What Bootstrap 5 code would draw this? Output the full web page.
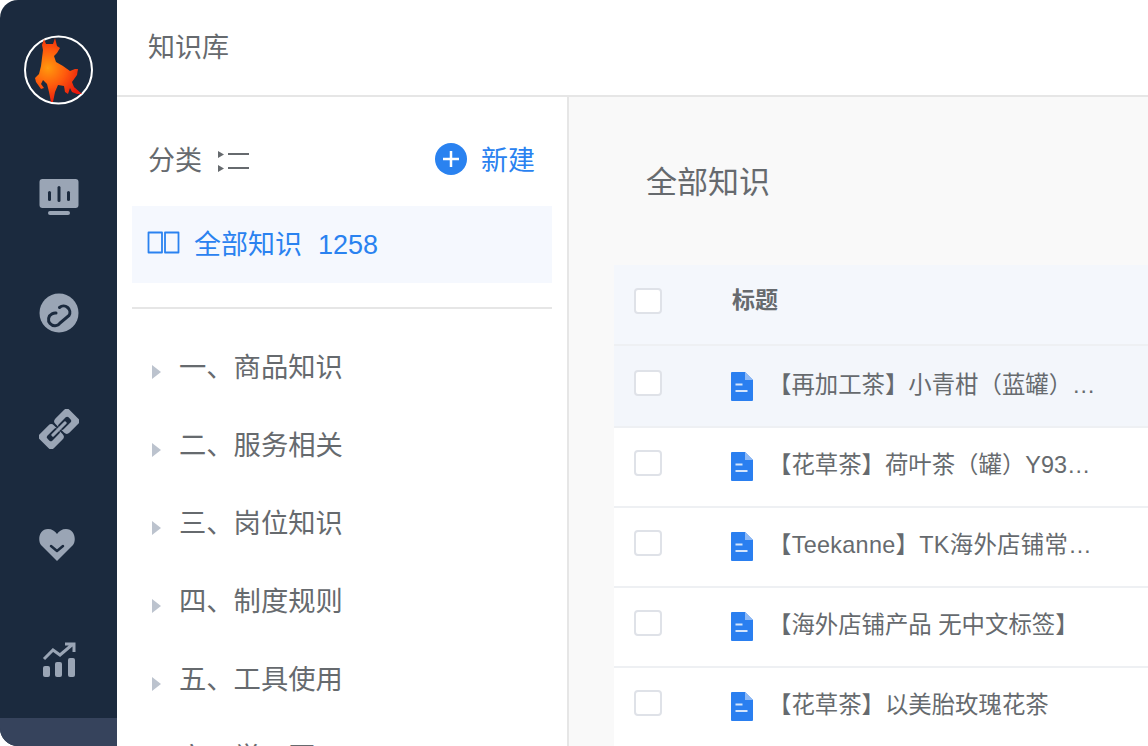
<!DOCTYPE html>
<html lang="zh">
<head>
<meta charset="utf-8">
<title>知识库</title>
<link rel="stylesheet" href="https://cdn.jsdelivr.net/npm/bootstrap@5.3.0/dist/css/bootstrap.min.css">
<style>
html,body{height:746px;overflow:hidden;background:#fff}
body{font-family:"Liberation Sans","Noto Sans CJK SC",sans-serif;color:#666a6e}
.shell{height:746px;width:1148px}
.rail{width:117px;flex:none;background:#1b2a3e;border-radius:18px 0 0 18px;overflow:hidden}
.rail-logo{height:140px;padding-top:35px;flex:none}
.rail-item{height:115.500px;flex:none}
.rail-stack{flex:1 1 auto}
.rail-foot{height:28px;background:#36435c;flex:none}
.topbar{height:97px;flex:none;border-bottom:2px solid #e6e6e6;padding-left:31px;padding-top:2px;font-size:27px;line-height:1;color:#666a6e}
.work{min-height:0}
.tree{width:452px;flex:none;border-right:2px solid #e6e6e6;padding:0 15px}
.tree-head{height:109px;padding:20px 17px 0 16px;font-size:27px}
.list-ico{margin-left:14px}
.new-btn{color:#2a82f0;gap:14px}
.new-ico{margin-bottom:5px;margin-left:-1px}
.all-row{height:77px;background:#f5f8fe;color:#2a82f0;font-size:27px;padding:2px 0 0 15px;gap:14px}
.book-ico{margin-bottom:6px}
.all-num{margin-left:16px}
.rule{height:2px;background:#e6e6e6;margin:24px 0 18px}
.tree-row{height:78px;font-size:27.300px;color:#666a6e;padding:4px 0 0 20px;gap:18px;white-space:nowrap}
.tree-arrow{width:0;height:0;border-left:9px solid #bcc3ce;border-top:7.500px solid transparent;border-bottom:7.500px solid transparent;margin-top:8px;flex:none}
.main-area{background:#f9f9f9;min-width:0;padding:0 0 0 45px;overflow:hidden}
.main-title{height:168px;font-size:31px;color:#666a6e;padding:3px 0 0 32px;line-height:1}
.sheet{background:#fff}
.sheet-row{height:80px;border-bottom:2px solid #eef0f3;padding:0 0 8px 20px;font-size:23.400px;color:#666a6e;white-space:nowrap}
.sheet-head{background:#f4f7fc;font-weight:700;height:81px;font-size:23px}
.sheet-hover{background:#f3f6fb;height:82px;padding-bottom:6px}
.tick{width:28px;height:26px;border:2px solid #dfe2e8;border-radius:4px;background:#fff;flex:none}
.cell-title{margin-left:70px}
.cell-doc{margin-left:69px;gap:15px}
.cell-text{width:340px;overflow:hidden;margin-top:6px}
.cell-wide{letter-spacing:.3px}
.doc-ico{margin-top:7px;flex:none}
</style>
</head>
<body>
<div class="shell d-flex">
  <nav class="rail d-flex flex-column">
    <div class="rail-logo d-flex justify-content-center">
      <svg width="70" height="71" viewBox="24 35 70 71">
        <defs>
          <radialGradient id="flame" gradientUnits="userSpaceOnUse" cx="48" cy="68" r="36"><stop offset="0" stop-color="#ff9a12"/><stop offset=".5" stop-color="#ff5a08"/><stop offset="1" stop-color="#e8190c"/></radialGradient>
          <filter id="soft" x="-10%" y="-10%" width="120%" height="120%"><feGaussianBlur stdDeviation=".6"/></filter>
        </defs>
        <circle cx="58.500" cy="70" r="33.500" fill="#1b2a3e" stroke="#fff" stroke-width="2"/>
        <path filter="url(#soft)" fill="url(#flame)" d="M44 39L46 44L53 44L55 38L57 46L60 48L57 53L54 56L56 62L63 66L70 71L75 69L78 69L77 75L72 82L74 87L82 94L77 94L72 92L70 88L68 94L65 92L64 86L58 85L55 92L53 102L51 102L49 92L47 84L43 80L41 84L44 88L41 89L36 82L35 78L39 74L41 66L42 58L43 50L42 45Z"/>
      </svg>
    </div>
    <div class="rail-stack d-flex flex-column align-items-center">
      <div class="rail-item d-flex align-items-center justify-content-center">
        <svg width="40" height="37" viewBox="0 0 40 37"><rect x="0.500" y="0" width="39" height="29" rx="3" fill="#9aa5b5"/><rect x="9" y="12" width="3" height="10" rx="1.500" fill="#1b2a3e"/><rect x="18.500" y="7" width="3" height="16" rx="1.500" fill="#1b2a3e"/><rect x="28" y="12" width="3" height="10" rx="1.500" fill="#1b2a3e"/><rect x="9" y="32" width="22" height="4" rx="2" fill="#9aa5b5"/></svg>
      </div>
      <div class="rail-item d-flex align-items-center justify-content-center">
        <svg width="40" height="40" viewBox="0 0 40 40"><circle cx="20" cy="20" r="19.500" fill="#9aa5b5"/><path d="M20.500 14.500A6.300 6.300 0 0 1 30 22.500L21 30A6.300 6.300 0 1 1 13 20.800Q15 19.800 17 20" fill="none" stroke="#1b2a3e" stroke-width="3" stroke-linecap="round"/></svg>
      </div>
      <div class="rail-item d-flex align-items-center justify-content-center">
        <svg width="40" height="40" viewBox="0 0 40 40"><g transform="rotate(-45 20 20)"><rect x="-1" y="10" width="20" height="20" rx="4" fill="#9aa5b5"/><rect x="21" y="10" width="20" height="20" rx="4" fill="#9aa5b5"/><rect x="5" y="16.500" width="14" height="7" rx="2" fill="#1b2a3e"/><rect x="21" y="16.500" width="14" height="7" rx="2" fill="#1b2a3e"/><rect x="10" y="18.500" width="20" height="3" rx="1" fill="#9aa5b5"/></g></svg>
      </div>
      <div class="rail-item d-flex align-items-center justify-content-center pe-1">
        <svg width="36" height="33" viewBox="0 0 36 33"><path fill="#9aa5b5" d="M18 33L2 17C-2 11 1 1 9 1c4 0 7 2 9 5 2-3 5-5 9-5 8 0 11 10 7 16z"/><path d="M12 18l6 5 6-5" fill="none" stroke="#1b2a3e" stroke-width="2.500" stroke-linecap="round" stroke-linejoin="round"/></svg>
      </div>
      <div class="rail-item d-flex align-items-center justify-content-center">
        <svg width="34" height="36" viewBox="0 0 34 36"><g fill="#9aa5b5"><rect x="1" y="24" width="7" height="11" rx="2"/><rect x="13" y="20" width="7" height="15" rx="2"/><rect x="26" y="16" width="7" height="19" rx="2"/></g><path d="M2 17l9-9 7 5 13-11M23 2h9v8" fill="none" stroke="#9aa5b5" stroke-width="3"/></svg>
      </div>
    </div>
    <div class="rail-foot"></div>
  </nav>
  <div class="flex-grow-1 d-flex flex-column" style="min-width:0">
    <header class="topbar d-flex align-items-center">知识库</header>
    <div class="work d-flex flex-grow-1">
      <aside class="tree">
        <div class="tree-head d-flex align-items-center justify-content-between">
          <div class="d-flex align-items-center">分类
            <svg class="list-ico" width="34" height="24" viewBox="0 0 34 24"><path d="M2 1l6 3.500-6 3.500zM2 15l6 3.500-6 3.500z" fill="#666a6e"/><path d="M12 4h21M12 18h21" stroke="#666a6e" stroke-width="2"/></svg>
          </div>
          <div class="new-btn d-flex align-items-center">
            <svg class="new-ico" width="32" height="32" viewBox="0 0 32 32"><circle cx="16" cy="16" r="16" fill="#2a82f0"/><path d="M16 8v16M8 16h16" stroke="#fff" stroke-width="2.500"/></svg>
            <span>新建</span>
          </div>
        </div>
        <div class="all-row d-flex align-items-center">
          <svg class="book-ico" width="33" height="24" viewBox="0 0 33 24"><g fill="none" stroke="#2a82f0" stroke-width="1.800" stroke-linejoin="round"><path d="M1.500 1.500h13.500v20h-13.500z"/><path d="M18 1.500h13.500v20h-13.500z"/></g></svg>
          <span>全部知识<span class="all-num">1258</span></span>
        </div>
        <div class="rule"></div>
        <div class="tree-row d-flex align-items-center"><span class="tree-arrow"></span><span>一、商品知识</span></div>
        <div class="tree-row d-flex align-items-center"><span class="tree-arrow"></span><span>二、服务相关</span></div>
        <div class="tree-row d-flex align-items-center"><span class="tree-arrow"></span><span>三、岗位知识</span></div>
        <div class="tree-row d-flex align-items-center"><span class="tree-arrow"></span><span>四、制度规则</span></div>
        <div class="tree-row d-flex align-items-center"><span class="tree-arrow"></span><span>五、工具使用</span></div>
        <div class="tree-row d-flex align-items-center"><span class="tree-arrow"></span><span>六、学习圈</span></div>
      </aside>
      <main class="main-area flex-grow-1">
        <div class="main-title d-flex align-items-center">全部知识</div>
        <div class="sheet">
          <div class="sheet-row sheet-head d-flex align-items-center"><span class="tick"></span><span class="cell-title">标题</span></div>
          <div class="sheet-row sheet-hover d-flex align-items-center"><span class="tick"></span><span class="cell-doc d-flex align-items-center"><svg class="doc-ico" width="22" height="29" viewBox="0 0 22 29"><path d="M1 0h13l8 8v20a1 1 0 0 1-1 1H1a1 1 0 0 1-1-1V1a1 1 0 0 1 1-1z" fill="#2a7ff0"/><path d="M14 0l8 8h-8z" fill="#8fbaf6"/><path d="M4.500 12.500h7M4.500 19h12" stroke="#d4e5fc" stroke-width="2"/></svg><span class="cell-text">【再加工茶】小青柑（蓝罐）…</span></span></div>
          <div class="sheet-row d-flex align-items-center"><span class="tick"></span><span class="cell-doc d-flex align-items-center"><svg class="doc-ico" width="22" height="29" viewBox="0 0 22 29"><path d="M1 0h13l8 8v20a1 1 0 0 1-1 1H1a1 1 0 0 1-1-1V1a1 1 0 0 1 1-1z" fill="#2a7ff0"/><path d="M14 0l8 8h-8z" fill="#8fbaf6"/><path d="M4.500 12.500h7M4.500 19h12" stroke="#d4e5fc" stroke-width="2"/></svg><span class="cell-text">【花草茶】荷叶茶（罐）Y93…</span></span></div>
          <div class="sheet-row d-flex align-items-center"><span class="tick"></span><span class="cell-doc d-flex align-items-center"><svg class="doc-ico" width="22" height="29" viewBox="0 0 22 29"><path d="M1 0h13l8 8v20a1 1 0 0 1-1 1H1a1 1 0 0 1-1-1V1a1 1 0 0 1 1-1z" fill="#2a7ff0"/><path d="M14 0l8 8h-8z" fill="#8fbaf6"/><path d="M4.500 12.500h7M4.500 19h12" stroke="#d4e5fc" stroke-width="2"/></svg><span class="cell-text cell-wide">【Teekanne】TK海外店铺常…</span></span></div>
          <div class="sheet-row d-flex align-items-center"><span class="tick"></span><span class="cell-doc d-flex align-items-center"><svg class="doc-ico" width="22" height="29" viewBox="0 0 22 29"><path d="M1 0h13l8 8v20a1 1 0 0 1-1 1H1a1 1 0 0 1-1-1V1a1 1 0 0 1 1-1z" fill="#2a7ff0"/><path d="M14 0l8 8h-8z" fill="#8fbaf6"/><path d="M4.500 12.500h7M4.500 19h12" stroke="#d4e5fc" stroke-width="2"/></svg><span class="cell-text">【海外店铺产品 无中文标签】</span></span></div>
          <div class="sheet-row d-flex align-items-center"><span class="tick"></span><span class="cell-doc d-flex align-items-center"><svg class="doc-ico" width="22" height="29" viewBox="0 0 22 29"><path d="M1 0h13l8 8v20a1 1 0 0 1-1 1H1a1 1 0 0 1-1-1V1a1 1 0 0 1 1-1z" fill="#2a7ff0"/><path d="M14 0l8 8h-8z" fill="#8fbaf6"/><path d="M4.500 12.500h7M4.500 19h12" stroke="#d4e5fc" stroke-width="2"/></svg><span class="cell-text">【花草茶】以美胎玫瑰花茶</span></span></div>
        </div>
      </main>
    </div>
  </div>
</div>
</body>
</html>
